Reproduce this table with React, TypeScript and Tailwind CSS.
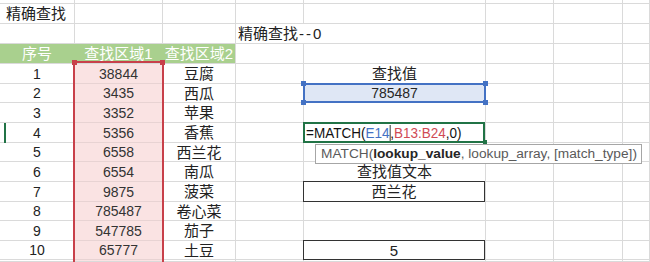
import React from "react";

const COLS = "grid grid-cols-[75px_88px_73px_68px_182px_68px_69px_27px]";
const FONT = "font-['Liberation_Sans','Noto_Sans_CJK_SC',sans-serif]";
const CELL =
  "border-r border-b border-[#dadada] flex items-center justify-center whitespace-nowrap min-w-0 overflow-visible leading-none";

const nums = ["38844", "3435", "3352", "5356", "6558", "6554", "9875", "785487", "547785", "65777"];
const vegs = ["豆腐", "西瓜", "苹果", "香蕉", "西兰花", "南瓜", "菠菜", "卷心菜", "茄子", "土豆"];
const heights = ["h-[20px]", "h-[19px]", "h-[20px]", "h-[20px]", "h-[19px]", "h-[20px]", "h-[20px]", "h-[19px]", "h-[20px]", "h-[19px]"];

function Empty() {
  return <div className={CELL} />;
}

function Tail() {
  return (
    <>
      <Empty />
      <Empty />
      <Empty />
    </>
  );
}

function ECell({ i }: { i: number }) {
  if (i === 0)
    return <div className={`${CELL} text-[15px] text-[#222]`}>查找值</div>;
  if (i === 1)
    return (
      <div className={`${CELL} relative`}>
        <div className="absolute left-[-1px] right-[-1px] top-[-1px] bottom-[-1px] border-2 border-[#4472c4] bg-[#dfe7f5] flex items-center justify-center text-[14px] text-[#262626]">
          785487
        </div>
        <div className="absolute left-[-3px] top-[-3px] w-[5px] h-[5px] bg-[#4472c4]" />
        <div className="absolute right-[-3px] top-[-3px] w-[5px] h-[5px] bg-[#4472c4]" />
        <div className="absolute left-[-3px] bottom-[-3px] w-[5px] h-[5px] bg-[#4472c4]" />
        <div className="absolute right-[-3px] bottom-[-3px] w-[5px] h-[5px] bg-[#4472c4]" />
      </div>
    );
  if (i === 3)
    return (
      <div className={`${CELL} relative`}>
        <div className="absolute left-[-1px] right-0 top-[-1px] bottom-[-1px] border-2 border-[#217346] bg-white flex items-center justify-start pl-[1px]">
          <div className="flex items-center text-[15px] text-[#111] scale-x-[0.9] origin-left">
            <span>=MATCH(</span>
            <span className="text-[#4472c4]">E14</span>
            <span className="inline-block w-px h-[16px] bg-[#222]" />
            <span>,</span>
            <span className="text-[#d04a55]">B13:B24</span>
            <span>,0)</span>
          </div>
        </div>
        <div className="absolute right-[-2px] bottom-[-2px] w-[4px] h-[4px] bg-[#217346]" />
      </div>
    );
  if (i === 5)
    return <div className={`${CELL} text-[15px] text-[#222]`}>查找值文本</div>;
  if (i === 6 || i === 9)
    return (
      <div className={`${CELL} relative`}>
        <div className="absolute left-[-1px] right-0 top-[-1px] bottom-[-1px] border border-[#333] bg-white flex items-center justify-center text-[15px] text-[#222]">
          {i === 6 ? "西兰花" : "5"}
        </div>
      </div>
    );
  return <Empty />;
}

export default function App() {
  return (
    <div className={`relative w-[650px] h-[262px] overflow-hidden bg-white ${FONT}`}>
      {/* row 0 partial */}
      <div className={`${COLS} h-[4px]`}>
        <Empty />
        <Empty />
        <Empty />
        <Empty />
        <Empty />
        <Tail />
      </div>
      {/* row 1 */}
      <div className={`${COLS} h-[20px]`}>
        <div className={`${CELL} justify-start pl-[6px] text-[15px] text-[#222]`}>精确查找</div>
        <Empty />
        <Empty />
        <Empty />
        <Empty />
        <Tail />
      </div>
      {/* row 2 */}
      <div className={`${COLS} h-[20px]`}>
        <Empty />
        <Empty />
        <Empty />
        <div className={`${CELL} col-span-2 justify-start pl-[2px] text-[15px] text-[#222]`}>
          精确查找<span className="tracking-[2px] pl-[1px]">--</span>0
        </div>
        <Tail />
      </div>
      {/* header row */}
      <div className={`${COLS} h-[20px]`}>
        <div className={`${CELL} bg-[#a9d08e] border-r-[#a9d08e] text-white text-[15px]`}>序号</div>
        <div className={`${CELL} bg-[#a9d08e] border-r-[#a9d08e] text-white text-[15px]`}>查找区域1</div>
        <div className={`${CELL} bg-[#a9d08e] text-white text-[15px]`}>查找区域2</div>
        <Empty />
        <Empty />
        <Tail />
      </div>
      {nums.map((n, i) => (
        <div key={i} className={`${COLS} ${heights[i]}`}>
          <div className={`${CELL} relative text-[14px] text-[#222]`}>
            {i === 3 && <div className="absolute left-[4px] top-0 bottom-[-1px] w-[2px] bg-[#217346]" />}
            {i + 1}
          </div>
          <div className={`${CELL} bg-[#fae3e3] border-b-[#e8d3d3] text-[14px] text-[#333]`}>{n}</div>
          <div className={`${CELL} text-[15px] text-[#222]`}>{vegs[i]}</div>
          <Empty />
          <ECell i={i} />
          <Tail />
        </div>
      ))}
      <div className={`${COLS} h-[2px]`}>
        <Empty />
        <div className={`${CELL} bg-[#fae3e3]`} />
        <Empty />
        <Empty />
        <Empty />
        <Tail />
      </div>

      {/* reference range highlight B13:B24 */}
      <div className="absolute left-[73px] top-[61px] w-[91px] h-[220px] border-2 border-[#c8404a] pointer-events-none" />
      <div className="absolute left-[72px] top-[60px] w-[5px] h-[5px] bg-[#c8404a]" />
      <div className="absolute left-[160px] top-[60px] w-[5px] h-[5px] bg-[#c8404a]" />

      {/* function tooltip */}
      <div className="absolute left-[315px] top-[144px] w-[327px] h-[20px] border border-[#a6a6a6] bg-white flex items-center pl-[5px] text-[13.7px] text-[#5a5a5a] whitespace-nowrap leading-none font-['Liberation_Sans',sans-serif]">
        <span>MATCH(</span>
        <span className="font-bold text-[#262626]">lookup_value</span>
        <span>, lookup_array, [match_type])</span>
      </div>
    </div>
  );
}
